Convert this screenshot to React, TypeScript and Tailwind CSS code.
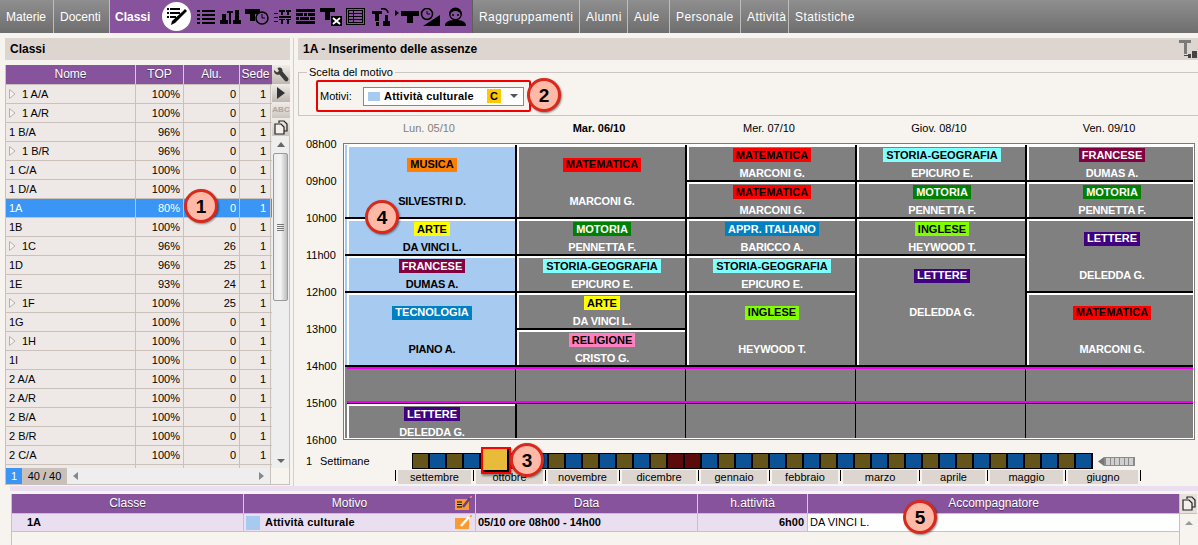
import React from "react";

type Row = { name: string; top: string; alu: string; tree?: boolean; selected?: boolean };
type Lesson = { span: string; subject?: string; tag?: string; teacher?: string; blue?: boolean; band?: boolean };

const rows: Row[] = [
  { name: "1 A/A", top: "100%", alu: "0", tree: true },
  { name: "1 A/R", top: "100%", alu: "0", tree: true },
  { name: "1 B/A", top: "96%", alu: "0" },
  { name: "1 B/R", top: "96%", alu: "0", tree: true },
  { name: "1 C/A", top: "100%", alu: "0" },
  { name: "1 D/A", top: "100%", alu: "0" },
  { name: "1A", top: "80%", alu: "0", selected: true },
  { name: "1B", top: "100%", alu: "0" },
  { name: "1C", top: "96%", alu: "26", tree: true },
  { name: "1D", top: "96%", alu: "25" },
  { name: "1E", top: "93%", alu: "24" },
  { name: "1F", top: "100%", alu: "25", tree: true },
  { name: "1G", top: "100%", alu: "0" },
  { name: "1H", top: "100%", alu: "0", tree: true },
  { name: "1I", top: "100%", alu: "0" },
  { name: "2 A/A", top: "100%", alu: "0" },
  { name: "2 A/R", top: "100%", alu: "0" },
  { name: "2 B/A", top: "100%", alu: "0" },
  { name: "2 B/R", top: "100%", alu: "0" },
  { name: "2 C/A", top: "100%", alu: "0" },
  { name: "", top: "", alu: "" },
];

const MUS = "bg-[#ff8000] text-black";
const MAT = "bg-[#ff0000] text-black";
const ART = "bg-[#ffff00] text-black";
const FRA = "bg-[#800040] text-white";
const TEC = "bg-[#0080c0] text-white";
const MOT = "bg-[#008000] text-white";
const STO = "bg-[#80ffff] text-black";
const REL = "bg-[#ff80c0] text-black";
const ING = "bg-[#80ff00] text-black";
const LET = "bg-[#400080] text-white";

const R1 = "row-span-1";
const R2 = "row-span-2";
const R3 = "row-span-3 pb-[37px]";

// filled column by column, 8 rows of one hour each
const lessons: Lesson[] = [
  { span: R2, subject: "MUSICA", tag: MUS, teacher: "SILVESTRI D.", blue: true },
  { span: R1, subject: "ARTE", tag: ART, teacher: "DA VINCI L.", blue: true },
  { span: R1, subject: "FRANCESE", tag: FRA, teacher: "DUMAS A.", blue: true },
  { span: R2, subject: "TECNOLOGIA", tag: TEC, teacher: "PIANO A.", blue: true },
  { span: R1, band: true },
  { span: R1, subject: "LETTERE", tag: LET, teacher: "DELEDDA G." },

  { span: R2, subject: "MATEMATICA", tag: MAT, teacher: "MARCONI G." },
  { span: R1, subject: "MOTORIA", tag: MOT, teacher: "PENNETTA F." },
  { span: R1, subject: "STORIA-GEOGRAFIA", tag: STO, teacher: "EPICURO E." },
  { span: R1, subject: "ARTE", tag: ART, teacher: "DA VINCI L." },
  { span: R1, subject: "RELIGIONE", tag: REL, teacher: "CRISTO G." },
  { span: R1, band: true },
  { span: R1 },

  { span: R1, subject: "MATEMATICA", tag: MAT, teacher: "MARCONI G." },
  { span: R1, subject: "MATEMATICA", tag: MAT, teacher: "MARCONI G." },
  { span: R1, subject: "APPR. ITALIANO", tag: TEC, teacher: "BARICCO A." },
  { span: R1, subject: "STORIA-GEOGRAFIA", tag: STO, teacher: "EPICURO E." },
  { span: R2, subject: "INGLESE", tag: ING, teacher: "HEYWOOD T." },
  { span: R1, band: true },
  { span: R1 },

  { span: R1, subject: "STORIA-GEOGRAFIA", tag: STO, teacher: "EPICURO E." },
  { span: R1, subject: "MOTORIA", tag: MOT, teacher: "PENNETTA F." },
  { span: R1, subject: "INGLESE", tag: ING, teacher: "HEYWOOD T." },
  { span: R3, subject: "LETTERE", tag: LET, teacher: "DELEDDA G." },
  { span: R1, band: true },
  { span: R1 },

  { span: R1, subject: "FRANCESE", tag: FRA, teacher: "DUMAS A." },
  { span: R1, subject: "MOTORIA", tag: MOT, teacher: "PENNETTA F." },
  { span: R2, subject: "LETTERE", tag: LET, teacher: "DELEDDA G." },
  { span: R2, subject: "MATEMATICA", tag: MAT, teacher: "MARCONI G." },
  { span: R1, band: true },
  { span: R1 },
];

const hours = ["08h00", "09h00", "10h00", "11h00", "12h00", "13h00", "14h00", "15h00", "16h00"];

const days = [
  { label: "Lun. 05/10", cls: "text-[#808080]" },
  { label: "Mar. 06/10", cls: "font-bold text-black" },
  { label: "Mer. 07/10", cls: "text-black" },
  { label: "Giov. 08/10", cls: "text-black" },
  { label: "Ven. 09/10", cls: "text-black" },
];

const months = [
  { label: "settembre", w: "w-[73px]" },
  { label: "ottobre", w: "w-[67px]" },
  { label: "novembre", w: "w-[69px]" },
  { label: "dicembre", w: "w-[74px]" },
  { label: "gennaio", w: "w-[66px]" },
  { label: "febbraio", w: "w-[66px]" },
  { label: "marzo", w: "w-[74px]" },
  { label: "aprile", w: "w-[63px]" },
  { label: "maggio", w: "w-[73px]" },
  { label: "giugno", w: "w-[70px]" },
];

function weekColor(i: number) {
  if (i === 15 || i === 16) return "bg-[#5c0a0a]";
  return i % 2 === 0 ? "bg-[#64541a]" : "bg-[#0c5297]";
}

function Badge({ n, cls }: { n: string; cls: string }) {
  return (
    <div
      className={`absolute z-20 flex h-[34px] w-[34px] items-center justify-center rounded-full border-[3px] border-[#d9281c] bg-[#ffb9a6] text-[19px] font-bold leading-none text-black shadow-[1px_1px_2px_rgba(0,0,0,0.45)] ${cls}`}
    >
      {n}
    </div>
  );
}

function Cell({ l }: { l: Lesson }) {
  if (!l.subject) {
    return (
      <div
        className={`${l.span} bg-[#808080] ${
          l.band
            ? "relative shadow-[inset_0_2px_0_#f000f0,inset_-1px_0_0_#808080,inset_-2px_0_0_#000]"
            : "shadow-[inset_-1px_0_0_#808080,inset_-2px_0_0_#000]"
        }`}
      >
        {l.band && <div className="absolute bottom-0 left-0 right-0 h-[3px] border-b border-black bg-[#f000f0]" />}
      </div>
    );
  }
  return (
    <div
      className={`${l.span} flex flex-col ${
        l.blue
          ? "-ml-[2px] bg-[#a6caf0] pl-[2px] text-black shadow-[inset_-2px_-2px_0_#000,inset_2px_0_0_#a6caf0,inset_4px_2px_0_#fff]"
          : "bg-[#808080] text-white shadow-[inset_-2px_-2px_0_#000,inset_2px_2px_0_#fff]"
      }`}
    >
      <div className="flex flex-1 translate-y-px items-center justify-center">
        <span className={`flex h-[14px] items-center px-[3px] ${l.tag}`}>{l.subject}</span>
      </div>
      <div className="flex flex-1 translate-y-px items-center justify-center tracking-[-0.2px]">{l.teacher}</div>
    </div>
  );
}

function TreeArrow() {
  return (
    <svg width="7" height="10" viewBox="0 0 7 10" className="mr-[6px] shrink-0">
      <path d="M.5.5 6 5 .5 9.5Z" fill="#f5f2ef" stroke="#b5b0aa" />
    </svg>
  );
}

function Tools() {
  return (
    <div className="flex w-[18px] flex-col">
      <div className="flex h-[19px] items-center justify-center bg-gradient-to-b from-[#f1ece8] to-[#bfb8b2]">
        <svg width="16" height="16" viewBox="0 0 16 16">
          <path d="M1 3 4 5.500 6 4 4.500 1C7-.5 10 1 9.500 4.500L15 11c1.500 2-1 4.500-3 3L6.500 7.500C3 8.500.5 6 1 3Z" fill="#3a3a3a" />
        </svg>
      </div>
      <div className="flex h-[18px] items-center justify-center bg-gradient-to-b from-[#f1ece8] to-[#bfb8b2]">
        <svg width="10" height="12" viewBox="0 0 10 12">
          <path d="M1 0 9 6 1 12Z" fill="#333" />
        </svg>
      </div>
      <div className="flex h-[16px] items-center justify-center bg-gradient-to-b from-[#f1ece8] to-[#cdc6c0] text-[8px] font-bold text-[#aca6a0]">
        ABC
      </div>
      <div className="flex h-[18px] items-center justify-center bg-gradient-to-b from-[#f1ece8] to-[#cdc6c0]">
        <CopyIcon />
      </div>
      <div className="flex flex-1 flex-col items-center border-r border-[#cbc1bb] bg-[#eeeeee]">
        <svg width="8" height="5" viewBox="0 0 8 5" className="mt-[6px]">
          <path d="M4 0 8 5H0Z" fill="#666" />
        </svg>
        <div className="mt-[6px] flex h-[148px] w-[15px] flex-col items-center justify-center gap-px rounded-[2px] border border-[#9a9a9a] bg-gradient-to-r from-[#ededed] via-[#f4f4f4] to-[#bdbdbd]">
          <div className="h-px w-[7px] bg-[#777]" />
          <div className="h-px w-[7px] bg-[#777]" />
          <div className="h-px w-[7px] bg-[#777]" />
          <div className="h-px w-[7px] bg-[#777]" />
        </div>
        <svg width="8" height="4" viewBox="0 0 8 4" className="mb-[5px] mt-auto">
          <path d="M0 0H8L4 4Z" fill="#666" />
        </svg>
      </div>
    </div>
  );
}

function CopyIcon() {
  return (
    <svg width="14" height="15" viewBox="0 0 14 15" fill="none" stroke="#222" strokeWidth="1.200">
      <path d="M5 3V1H10L13 4V11H10" />
      <path d="M1 4H7L10 7V14H1Z" fill="#f3efeb" />
    </svg>
  );
}

function ClassList() {
  return (
    <div className="ml-[5px] flex w-[285px] flex-col">
      <div className="flex h-[22px] items-center bg-[#ddd6d0] pl-[5px] text-[12px] font-bold">Classi</div>
      <div className="mt-[5px] flex h-[403px]">
        <div className="w-[267px] overflow-hidden border-l border-[#cbc1bb]">
          <div className="grid h-[19px] grid-cols-[130px_48px_56px_31px] bg-[#87539d] text-center text-[12px] leading-[19px] text-white [text-shadow:0_1px_1px_rgba(0,0,0,0.5)]">
            <div className="border-r border-[#d5ccd9]">Nome</div>
            <div className="border-r border-[#d5ccd9]">TOP</div>
            <div className="border-r border-[#d5ccd9]">Alu.</div>
            <div>Sede</div>
          </div>
          {rows.map((r, i) => (
            <div
              key={i}
              className={`grid h-[19px] grid-cols-[130px_48px_56px_31px] border-t border-[#cbc1bb] text-[11px] leading-[18px] ${
                r.selected ? "bg-[#3b95f5] text-white" : "bg-[#eee9e6] text-black"
              }`}
            >
              <div className="flex items-center border-r border-[#cbc1bb] pl-[2px]">
                {r.tree && (
                  <span className="ml-[1px] flex items-center">
                    <TreeArrow />
                  </span>
                )}
                <span className={r.tree ? "" : "ml-[1px]"}>{r.name}</span>
              </div>
              <div className="border-r border-[#cbc1bb] pr-[3px] text-right">{r.top}</div>
              <div className="border-r border-[#cbc1bb] pr-[3px] text-right">{r.alu}</div>
              <div className="border-r border-[#cbc1bb] pr-[4px] text-right">{r.name ? "1" : ""}</div>
            </div>
          ))}
        </div>
        <Tools />
      </div>
      <div className="flex h-[17px] border-b border-l border-[#cbc1bb] text-[11px]">
        <div className="flex w-[16px] items-center justify-center bg-[#3b95f5] text-white">1</div>
        <div className="flex w-[45px] items-center justify-center bg-[#c9c0ba]">40 / 40</div>
        <div className="flex w-[204px] items-center justify-between border-r border-[#cbc1bb] bg-[#eeeeee] px-[6px]">
          <svg width="5" height="8" viewBox="0 0 5 8">
            <path d="M5 0V8L0 4Z" fill="#888" />
          </svg>
          <svg width="5" height="8" viewBox="0 0 5 8">
            <path d="M0 0V8L5 4Z" fill="#888" />
          </svg>
        </div>
        <div className="flex-1 border-r border-[#cbc1bb]" />
      </div>
    </div>
  );
}

function Timetable() {
  return (
    <div className="flex h-[297px]">
      <div className="mt-px flex w-[45px] flex-col pl-[8px] text-[11px]">
        {hours.map((h) => (
          <div key={h} className="h-[37px] shrink-0 -translate-y-[7px] leading-[14px]">
            {h}
          </div>
        ))}
      </div>
      <div className="h-[297px] w-[852px] border border-[#7d7a76]">
        <div className="h-[295px] w-[850px] border border-white">
          <div className="h-[293px] w-[848px] overflow-hidden bg-[#808080] pl-[2px]">
            <div className="grid grid-flow-col grid-cols-[repeat(5,170px)] grid-rows-[repeat(8,37px)] text-center text-[11px] font-bold leading-none">
              {lessons.map((l, i) => (
                <Cell key={i} l={l} />
              ))}
            </div>
          </div>
        </div>
      </div>
    </div>
  );
}

function Weeks() {
  return (
    <>
      <div className="mt-[13px] flex h-[16px] items-center text-[11px]">
        <span className="ml-[8px] w-[14px]">1</span>
        <span className="w-[92px]">Settimane</span>
        <div className="relative flex h-[16px] bg-black py-px pl-[1px]">
          {Array.from({ length: 40 }, (_, i) => (
            <div key={i} className={`h-[14px] w-[17px] border-r-2 border-black ${weekColor(i)}`} />
          ))}
          <div className="absolute -top-[6px] left-[69px] h-[27px] w-[30px] border-2 border-[#ff0000] bg-black pb-[2px] pr-[2px] shadow-[1px_2px_2px_rgba(0,0,0,0.4)]">
            <div className="h-full w-full bg-[#e8bc3a]" />
          </div>
        </div>
        <svg width="6" height="9" viewBox="0 0 6 9" className="ml-[5px]">
          <path d="M6 0V9L0 4.500Z" fill="#777" />
        </svg>
        <div className="flex h-[9px] w-[31px] items-center gap-px border border-[#8a8a8a] bg-[#8a8a8a] px-px">
          {[0, 1, 2, 3, 4, 5].map((i) => (
            <div key={i} className="h-[7px] flex-1 bg-[#cfcfcf]" />
          ))}
        </div>
      </div>
      <div className="ml-[97px] mt-px flex h-[14px] gap-[2px] text-[11px] leading-[14px]">
        {months.map((m) => (
          <React.Fragment key={m.label}>
            <div className="h-[11px] w-px bg-black" />
            <div className={`${m.w} bg-[#ddd6d0] text-center`}>{m.label}</div>
          </React.Fragment>
        ))}
        <div className="h-[11px] w-px bg-black" />
      </div>
    </>
  );
}

function RightPanel() {
  return (
    <div className="ml-[3px] flex flex-1 flex-col border-l border-[#d4cfc9] pl-[4px]">
      <div className="flex h-[22px] items-center justify-between bg-[#ddd6d0] pl-[5px] pr-[1px] text-[12px] font-bold">
        <span>1A - Inserimento delle assenze</span>
        <svg width="18" height="18" viewBox="0 0 18 18">
          <path d="M0 0H12V3H8V14H5V3H0Z" fill="#7a7a7a" />
          <path d="M9 14H12V18H9ZM5 15H9V16H5ZM13 11H18V18H13Z" fill="#444" />
        </svg>
      </div>
      <div className="relative mt-[12px] h-[44px] border-b border-l border-t border-[#cbc6c0] pl-[17px] pt-[7px]">
        <span className="absolute -top-[8px] left-[8px] bg-[#f7f3ef] px-[2px] text-[11px] leading-[14px]">Scelta del motivo</span>
        <div className="flex h-[32px] w-[215px] items-center rounded-[2px] border-2 border-[#f00000] pl-[2px] text-[11px]">
          <span className="w-[43px]">Motivi:</span>
          <div className="flex h-[19px] w-[161px] items-center border border-[#8c8880] bg-white pl-[4px]">
            <div className="h-[9px] w-[12px] bg-[#a6caf0]" />
            <span className="ml-[4px] w-[103px] font-bold tracking-[0.2px]">Attività culturale</span>
            <span className="flex h-[14px] w-[14px] items-center justify-center bg-[#ffc800] font-bold">C</span>
            <svg width="8" height="4" viewBox="0 0 8 4" className="ml-[9px]">
              <path d="M0 0H8L4 4Z" fill="#555" />
            </svg>
          </div>
        </div>
      </div>
      <div className="ml-[46px] flex h-[27px] items-center pb-[3px] text-[11px]">
        {days.map((d) => (
          <div key={d.label} className={`w-[170px] text-center ${d.cls}`}>
            {d.label}
          </div>
        ))}
      </div>
      <Timetable />
      <Weeks />
    </div>
  );
}

function AbsenceTable() {
  return (
    <div className="ml-[11px] mt-[3px] flex flex-1 border-l border-[#cbc1bb] text-[11px]">
      <div className="w-[1167px]">
        <div className="grid h-[19px] grid-cols-[232px_232px_222px_110px_371px] bg-[#87539d] text-center text-[12px] leading-[19px] text-white [text-shadow:0_1px_1px_rgba(0,0,0,0.5)]">
          <div className="border-r border-[#d5ccd9]">Classe</div>
          <div className="relative border-r border-[#d5ccd9] pr-[20px]">
            Motivo
            <svg width="17" height="14" viewBox="0 0 17 14" className="absolute right-[3px] top-[2px]">
              <rect y="3" width="14" height="11" fill="#f99a32" />
              <path d="M2 6H7M2 8.500H7M2 11H7" stroke="#000" />
              <path d="M8 11 15 2" stroke="#6b3f8a" strokeWidth="2.500" />
              <path d="M15 2 17 0" stroke="#f99a32" strokeWidth="1.500" />
            </svg>
          </div>
          <div className="border-r border-[#d5ccd9]">Data</div>
          <div className="border-r border-[#d5ccd9]">h.attività</div>
          <div>Accompagnatore</div>
        </div>
        <div className="grid h-[19px] grid-cols-[232px_232px_222px_110px_371px] border-b border-t border-[#cbc1bb] bg-[#e9dff0] leading-[17px]">
          <div className="border-r border-[#cbc1bb] pl-[15px] font-bold">1A</div>
          <div className="relative flex items-center border-r border-[#cbc1bb] pl-[2px] font-bold">
            <div className="h-[14px] w-[14px] bg-[#a6caf0]" />
            <span className="ml-[5px] tracking-[0.2px]">Attività culturale</span>
            <svg width="17" height="14" viewBox="0 0 17 14" className="absolute right-[3px] top-[1px]">
              <rect y="3" width="14" height="11" fill="#f99a32" />
              <path d="M6 11 14 2" stroke="#fff" strokeWidth="2.500" />
              <path d="M15 2 17 0" stroke="#f99a32" strokeWidth="1.500" />
            </svg>
          </div>
          <div className="border-r border-[#cbc1bb] pl-[2px] font-bold">05/10 ore 08h00 - 14h00</div>
          <div className="border-r border-[#cbc1bb] pr-[3px] text-right font-bold">6h00</div>
          <div className="bg-white pl-[2px]">DA VINCI L.</div>
        </div>
      </div>
      <div className="w-[18px] border-l border-[#cbc1bb]">
        <div className="flex h-[19px] items-center justify-center bg-[#e7e1dc]">
          <CopyIcon />
        </div>
        <div className="flex h-[19px] justify-center border-t border-[#cbc1bb] pt-[7px]">
          <svg width="8" height="4" viewBox="0 0 8 4">
            <path d="M4 0 8 4H0Z" fill="#999" />
          </svg>
        </div>
      </div>
    </div>
  );
}

const toolbarIcons = (
  <>
    {/* lista */}
    <svg width="18" height="14" viewBox="0 0 18 14" className="ml-[6px]">
      <path d="M0 0H3V2H0ZM5 0H18V2H5ZM0 4H3V6H0ZM5 4H18V6H5ZM0 8H3V10H0ZM5 8H18V10H5ZM0 12H3V14H0ZM5 12H18V14H5Z" />
    </svg>
    {/* colonne */}
    <svg width="21" height="14" viewBox="0 0 21 14" className="ml-[5px]">
      <path d="M0 10H8V14H0ZM2 4H6V10H2ZM7 1H13V3H11V14H9V3H7ZM13 10H21V14H13ZM15 0H19V10H15Z" />
    </svg>
    {/* T orologio */}
    <svg width="25" height="16" viewBox="0 0 25 16" className="ml-[4px]">
      <path d="M0 0H15V5H10V12H5V5H0Z" />
      <circle cx="17" cy="9" r="6" fill="#87539d" stroke="#000" strokeWidth="1.500" />
      <path d="M17 5V9H20" fill="none" stroke="#000" />
    </svg>
    {/* griglia T */}
    <svg width="17" height="14" viewBox="0 0 17 14" className="ml-[4px]">
      <path d="M0 3H4V4H0ZM0 7H4V8H0ZM0 11H4V12H0ZM5 0H11V2H9V5H7V2H5ZM12 0H17V2H15V5H13V2H12ZM5 6H17V8H5ZM7 9H9V14H7ZM13 9H15V14H13ZM5 9H11V10H5ZM12 9H17V10H12Z" />
    </svg>
    {/* mattoni */}
    <svg width="19" height="15" viewBox="0 0 19 15" className="ml-[5px]">
      <path d="M0 0H19V3H0ZM0 4H7V7H0ZM8 4H11V7H8ZM12 4H19V7H12ZM0 8H3V11H0ZM4 8H13V11H4ZM14 8H19V11H14ZM0 12H19V15H0Z" />
    </svg>
    {/* T x */}
    <svg width="22" height="18" viewBox="0 0 22 18" className="ml-[5px]">
      <path d="M0 0H15V4H10V12H5V4H0Z" />
      <rect x="11" y="8" width="11" height="10" />
      <path d="M13 10 20 16M20 10 13 16" stroke="#fff" strokeWidth="1.800" />
    </svg>
    {/* tabella */}
    <svg width="19" height="17" viewBox="0 0 19 17" className="ml-[4px]" fill="none" stroke="#000">
      <rect x=".5" y=".5" width="18" height="16" />
      <rect x="2.500" y="2.500" width="14" height="12" />
      <path d="M2.500 5.500H16.500M2.500 8.500H16.500M2.500 11.500H16.500M7.500 2.500V14.500" />
    </svg>
    {/* T freccia */}
    <svg width="19" height="18" viewBox="0 0 19 18" className="ml-[7px]">
      <path d="M0 3H10V6H7V13H3V6H0ZM4 14H7V18H4ZM11 13H18V18H11ZM13 7H16V13H13Z" />
      <path d="M9 1C13 0 16 2 16 5" fill="none" stroke="#000" strokeWidth="1.500" />
    </svg>
    {/* freccia T */}
    <svg width="24" height="13" viewBox="0 0 24 13" className="ml-[4px]">
      <path d="M0 0 4 3 0 6ZM6 1H24V6H18V13H12V6H6Z" />
    </svg>
    {/* orologio */}
    <svg width="20" height="18" viewBox="0 0 20 18" className="ml-px">
      <circle cx="7" cy="6" r="5.500" fill="none" stroke="#000" strokeWidth="1.500" />
      <path d="M7 3V6H10" fill="none" stroke="#000" />
      <path d="M20 7V18H3Z" />
    </svg>
    {/* persona */}
    <svg width="21" height="19" viewBox="0 0 21 19" className="ml-[5px]">
      <path d="M0 19C0 14 5 13 10.500 13S21 14 21 19Z" />
      <circle cx="10.500" cy="7" r="6.500" />
      <ellipse cx="10.500" cy="8" rx="5" ry="4" fill="#87539d" />
      <circle cx="8" cy="8" r="1" />
      <circle cx="13" cy="8" r="1" />
    </svg>
  </>
);

function Tab({ label, w }: { label: string; w: string }) {
  return (
    <div className={`${w} flex h-full items-center border-r border-[#bdbdbd] pl-[6px] text-[12px] text-white`}>{label}</div>
  );
}

export default function App() {
  return (
    <div className="relative flex h-[545px] w-[1198px] flex-col overflow-hidden bg-[#f7f3ef] font-['Liberation_Sans',Arial,sans-serif] text-black">
      <div className="flex h-[33px] shrink-0 items-center bg-gradient-to-b from-[#8f8f8f] to-[#6e6e6e]">
        <Tab label="Materie" w="w-[54px]" />
        <Tab label="Docenti" w="w-[56px]" />
        <div className="flex h-full w-[362px] items-center bg-[#87539d] pl-[5px] text-[12px] font-bold text-white">
          <span className="w-[47px]">Classi</span>
          <div className="flex h-[29px] w-[29px] items-center justify-center rounded-full bg-white">
            <svg width="20" height="19" viewBox="0 0 20 19">
              <path d="M0 1H2V3H0ZM3 1H13V3H3ZM0 5H2V7H0ZM3 5H13V7H3ZM0 9H2V11H0ZM3 9H9V11H3Z" />
              <path d="M5 14 15 5 18 2 20 4 8 16 4 18Z" />
            </svg>
          </div>
          {toolbarIcons}
        </div>
        <div className="h-full w-px bg-[#5f5f5f]" />
        <div className="flex h-full flex-1 items-center tracking-[0.4px]">
          <Tab label="Raggruppamenti" w="w-[107px]" />
          <Tab label="Alunni" w="w-[48px]" />
          <Tab label="Aule" w="w-[42px]" />
          <Tab label="Personale" w="w-[71px]" />
          <Tab label="Attività" w="w-[48px]" />
          <div className="flex h-full flex-1 items-center pl-[6px] text-[12px] text-white">Statistiche</div>
        </div>
      </div>
      <div className="flex h-[453px] shrink-0 pt-[5px]">
        <ClassList />
        <RightPanel />
      </div>
      <div className="ml-[10px] h-[5px] shrink-0 bg-[#e9dff0]" />
      <AbsenceTable />
      <Badge n="1" cls="left-[184px] top-[189px]" />
      <Badge n="2" cls="left-[527px] top-[78px]" />
      <Badge n="3" cls="left-[510px] top-[443px]" />
      <Badge n="4" cls="left-[365px] top-[200px]" />
      <Badge n="5" cls="left-[903px] top-[500px]" />
    </div>
  );
}
